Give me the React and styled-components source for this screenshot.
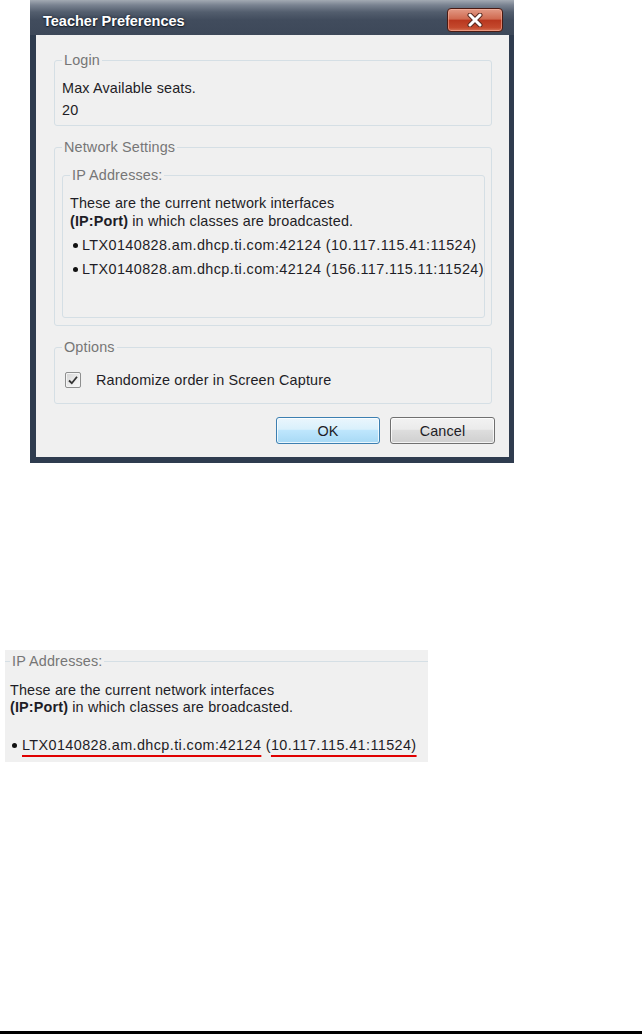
import React from 'react'
import styled, { createGlobalStyle } from 'styled-components'

const GlobalStyle = createGlobalStyle`
  html, body {
    margin: 0;
    padding: 0;
    background: #ffffff;
  }
  body {
    font-family: "Liberation Sans", Arial, sans-serif;
    font-size: 14.4px;
    letter-spacing: 0.15px;
    color: #1e1d26;
  }
`

const Page = styled.div`
  width: 642px;
  min-height: 1034px;
  display: flex;
  flex-direction: column;
  align-items: flex-start;
`

const Window = styled.div`
  margin-left: 30px;
  width: 484px;
  display: flex;
  flex-direction: column;
  background: #2f3c4f;
  padding: 0 5px 6px 6px;
  box-sizing: border-box;
`

const TitleBar = styled.div`
  height: 35px;
  margin: 0 -5px 0 -6px;
  padding: 0 11px 0 13px;
  display: flex;
  align-items: flex-start;
  justify-content: space-between;
  background: linear-gradient(
    #a3aab3 0px,
    #7a8391 5px,
    #535e6e 12px,
    #414c5d 20px,
    #3d4859 100%
  );
`

const Title = styled.span`
  margin-top: 13px;
  font-size: 14.5px;
  font-weight: bold;
  letter-spacing: 0;
  color: #ffffff;
  text-shadow: 0 0 3px rgba(20, 30, 45, 0.9), 0 1px 1px rgba(0, 0, 0, 0.6);
  line-height: 16px;
`

const CloseButton = styled.div`
  margin-top: 8px;
  width: 56px;
  height: 24px;
  box-sizing: border-box;
  border: 1px solid #4a1a12;
  border-radius: 4px;
  display: flex;
  align-items: center;
  justify-content: center;
  background: linear-gradient(
    #e29a86 0%,
    #d06a50 45%,
    #b9371f 52%,
    #c44a2e 85%,
    #d7765a 100%
  );
  box-shadow: inset 0 0 0 1px rgba(255, 190, 170, 0.5);
`

const Content = styled.div`
  background: #f0f0f0;
  padding: 17px 17px 13px 18px;
  display: flex;
  flex-direction: column;
  gap: 13px;
`

const Group = styled.fieldset`
  margin: 0;
  min-inline-size: 0;
  border: 1px solid #d5dfe5;
  border-radius: 3px;
  padding: ${({ $pad }) => $pad || '11px 6px 6px 7px'};
  display: flex;
  flex-direction: column;
`

const Legend = styled.legend`
  padding: 0 2px;
  line-height: 16px;
  color: #767676;
`

const Line = styled.div`
  line-height: ${({ $lh }) => $lh || 18}px;
  margin-top: ${({ $mt }) => $mt || 0}px;
  white-space: nowrap;
`

const HostLine = styled(Line)`
  letter-spacing: 0.4px;
`

const Strong = styled.b`
  font-weight: bold;
`

const Bullet = styled.span`
  display: inline-block;
  width: 5px;
  height: 5px;
  border-radius: 50%;
  background: #111;
  margin: 0 ${({ $gap }) => $gap || 4}px 2px ${({ $indent }) => $indent || 3}px;
  vertical-align: middle;
`

const Marked = styled.span`
  text-decoration: underline;
  text-decoration-color: #e00000;
  text-decoration-thickness: 2px;
  text-underline-offset: 5px;
`

const CheckRow = styled.label`
  display: flex;
  align-items: center;
  height: 18px;
  gap: 15px;
  padding-left: 3px;
`

const CheckBox = styled.span`
  width: 16px;
  height: 16px;
  box-sizing: border-box;
  border: 1px solid #8e8f8f;
  border-radius: 2px;
  background: linear-gradient(135deg, #d4d4d4 0%, #ececec 55%, #f8f8f8 100%);
  box-shadow: inset 0 0 0 1px #f4f4f4;
  display: flex;
  align-items: center;
  justify-content: center;
`

const ButtonRow = styled.div`
  display: flex;
  justify-content: flex-end;
  gap: 10px;
  margin-right: -3px;
`

const Button = styled.button`
  width: ${({ $w }) => $w}px;
  height: 27px;
  font-family: "Liberation Sans", Arial, sans-serif;
  font-size: 14.4px;
  letter-spacing: 0.15px;
  color: #1e1d26;
  border-radius: 3px;
  border: 1px solid ${({ $primary }) => ($primary ? '#3c7fb1' : '#707070')};
  background: ${({ $primary }) =>
    $primary
      ? 'linear-gradient(#eaf6fd 0%, #d9f0fc 45%, #bee6fd 50%, #a7d9f5 100%)'
      : 'linear-gradient(#f2f2f2 0%, #ebebeb 45%, #dddddd 50%, #cfcfcf 100%)'};
  box-shadow: inset 0 0 0 1px rgba(255, 255, 255, 0.75);
  padding: 0;
`

const Callout = styled.div`
  margin: 187px 0 0 5px;
  width: 423px;
  height: 112px;
  background: #f0f0f0;
`

const CalloutGroup = styled.fieldset`
  margin: 0;
  min-inline-size: 0;
  border: none;
  border-top: 1px solid #d5dfe5;
  padding: 13px 0 0 5px;
  margin-top: 3px;
`

const Footer = styled.div`
  margin-top: auto;
  align-self: stretch;
  height: 3px;
  background: #000;
`

const CloseIcon = () => (
  <svg width="18" height="14" viewBox="0 0 18 14">
    <path d="M4 2 L14 12 M14 2 L4 12" stroke="#5a2a20" strokeWidth="5" strokeLinecap="round" />
    <path d="M4 2 L14 12 M14 2 L4 12" stroke="#ffffff" strokeWidth="3" strokeLinecap="round" />
  </svg>
)

const CheckIcon = () => (
  <svg width="12" height="12" viewBox="0 0 12 12">
    <path d="M2 6.5 L4.8 9.2 L10 2.8" fill="none" stroke="#333" strokeWidth="1.8" />
  </svg>
)

const hosts = [
  'LTX0140828.am.dhcp.ti.com:42124 (10.117.115.41:11524)',
  'LTX0140828.am.dhcp.ti.com:42124 (156.117.115.11:11524)',
]

export default function App() {
  return (
    <>
      <GlobalStyle />
      <Page>
        <Window>
          <TitleBar>
            <Title>Teacher Preferences</Title>
            <CloseButton>
              <CloseIcon />
            </CloseButton>
          </TitleBar>
          <Content>
            <Group>
              <Legend>Login</Legend>
              <Line>Max Available seats.</Line>
              <Line $mt={4}>20</Line>
            </Group>

            <Group $pad="12px 6px 7px 7px">
              <Legend>Network Settings</Legend>
              <Group $pad="11px 6px 39px 7px">
                <Legend>IP Addresses:</Legend>
                <Line>These are the current network interfaces</Line>
                <Line>
                  <Strong>(IP:Port)</Strong> in which classes are broadcasted.
                </Line>
                {hosts.map((h) => (
                  <HostLine key={h} $mt={6}>
                    <Bullet />
                    {h}
                  </HostLine>
                ))}
              </Group>
            </Group>

            <Group $pad="16px 6px 14px 7px">
              <Legend>Options</Legend>
              <CheckRow>
                <CheckBox>
                  <CheckIcon />
                </CheckBox>
                Randomize order in Screen Capture
              </CheckRow>
            </Group>

            <ButtonRow>
              <Button $primary $w={104}>OK</Button>
              <Button $w={105}>Cancel</Button>
            </ButtonRow>
          </Content>
        </Window>

        <Callout>
          <CalloutGroup>
            <Legend>IP Addresses:</Legend>
            <Line $lh={17}>These are the current network interfaces</Line>
            <Line $lh={17}>
              <Strong>(IP:Port)</Strong> in which classes are broadcasted.
            </Line>
            <HostLine $mt={20}>
              <Bullet $indent={2} $gap={5} />
              <Marked>LTX0140828.am.dhcp.ti.com:42124</Marked> (
              <Marked>10.117.115.41:11524)</Marked>
            </HostLine>
          </CalloutGroup>
        </Callout>

        <Footer />
      </Page>
    </>
  )
}
